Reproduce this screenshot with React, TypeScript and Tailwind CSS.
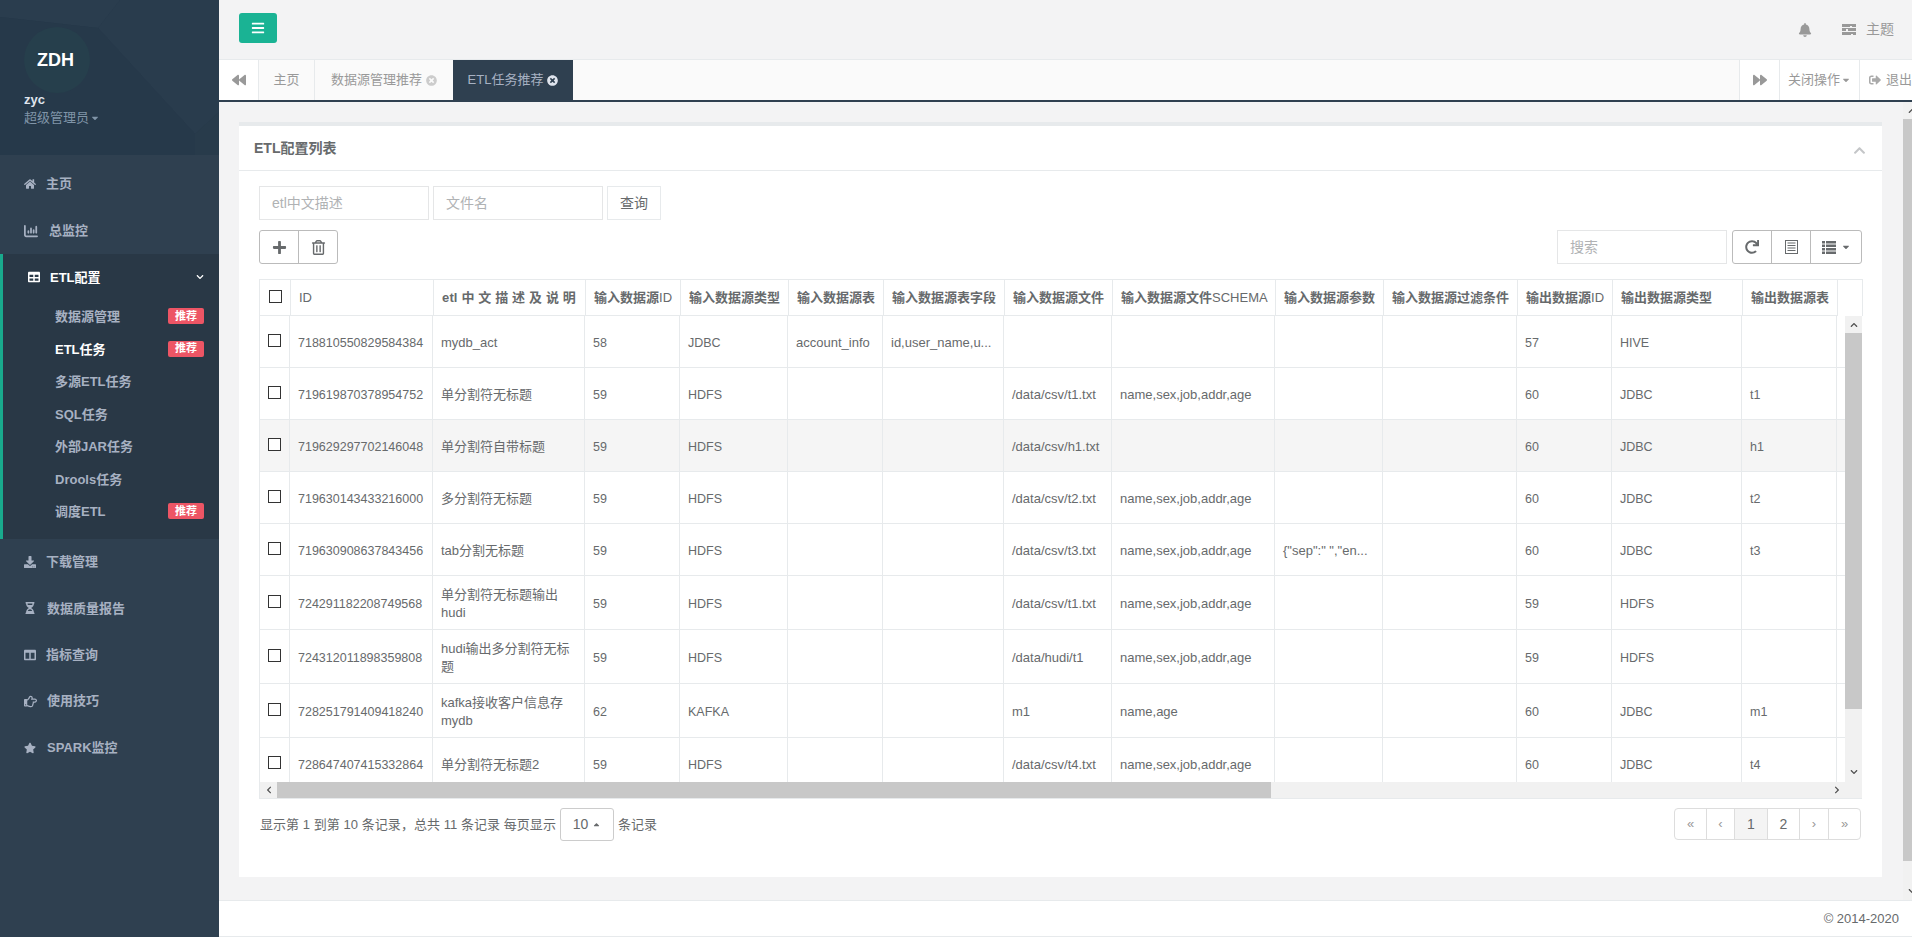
import React from "react";
import {
  FaHome, FaTable, FaDownload, FaHourglassHalf, FaColumns, FaRegHandPointRight, FaStar, FaBell, FaBars,
  FaBackward, FaForward, FaTimesCircle, FaSignOutAlt, FaPlus, FaRegTrashAlt, FaRedo,
  FaChevronUp, FaChevronDown, FaChevronLeft, FaChevronRight, FaCaretDown, FaCaretUp,
} from "react-icons/fa";
import { FaChartColumn } from "react-icons/fa6";

const headW = ["w-[32px]", "w-[143px]", "w-[152px]", "w-[95px]", "w-[108px]", "w-[95px]", "w-[121px]", "w-[108px]", "w-[163px]", "w-[108px]", "w-[134px]", "w-[95px]", "w-[130px]", "w-[95px]", "w-[25px]"];
const bodyW = ["w-[31px]", "w-[143px]", "w-[152px]", "w-[95px]", "w-[108px]", "w-[95px]", "w-[121px]", "w-[108px]", "w-[163px]", "w-[108px]", "w-[134px]", "w-[95px]", "w-[130px]", "w-[95px]", "w-[40px]"];
const N = ({ children }: { children: React.ReactNode }) => <span className="font-normal">{children}</span>;
const heads: React.ReactNode[] = [
  <N>ID</N>,
  <span className="tracking-[0.15px]">etl 中 文 描 述 及 说 明</span>,
  <>输入数据源<N>ID</N></>,
  "输入数据源类型", "输入数据源表", "输入数据源表字段", "输入数据源文件",
  <>输入数据源文件<N>SCHEMA</N></>,
  "输入数据源参数", "输入数据源过滤条件",
  <>输出数据源<N>ID</N></>,
  "输出数据源类型", "输出数据源表", "",
];
const S = "name,sex,job,addr,age";
const rows: { h: string; hover?: boolean; c: string[] }[] = [
  { h: "h-[52px]", c: ["718810550829584384", "mydb_act", "58", "JDBC", "account_info", "id,user_name,u...", "", "", "", "", "57", "HIVE", "", ""] },
  { h: "h-[52px]", c: ["719619870378954752", "单分割符无标题", "59", "HDFS", "", "", "/data/csv/t1.txt", S, "", "", "60", "JDBC", "t1", ""] },
  { h: "h-[52px]", hover: true, c: ["719629297702146048", "单分割符自带标题", "59", "HDFS", "", "", "/data/csv/h1.txt", "", "", "", "60", "JDBC", "h1", ""] },
  { h: "h-[52px]", c: ["719630143433216000", "多分割符无标题", "59", "HDFS", "", "", "/data/csv/t2.txt", S, "", "", "60", "JDBC", "t2", ""] },
  { h: "h-[52px]", c: ["719630908637843456", "tab分割无标题", "59", "HDFS", "", "", "/data/csv/t3.txt", S, "{\"sep\":\" \",\"en...", "", "60", "JDBC", "t3", ""] },
  { h: "h-[54px]", c: ["724291182208749568", "单分割符无标题输出hudi", "59", "HDFS", "", "", "/data/csv/t1.txt", S, "", "", "59", "HDFS", "", ""] },
  { h: "h-[54px]", c: ["724312011898359808", "hudi输出多分割符无标题", "59", "HDFS", "", "", "/data/hudi/t1", S, "", "", "59", "HDFS", "", ""] },
  { h: "h-[54px]", c: ["728251791409418240", "kafka接收客户信息存mydb", "62", "KAFKA", "", "", "m1", "name,age", "", "", "60", "JDBC", "m1", ""] },
  { h: "h-[52px]", c: ["728647407415332864", "单分割符无标题2", "59", "HDFS", "", "", "/data/csv/t4.txt", S, "", "", "60", "JDBC", "t4", ""] },
];

function Box() {
  return <div className="w-[13px] h-[13px] border border-[#333] bg-white mb-[3px]" />;
}

function NavItem({ icon, text, gap }: { icon: React.ReactNode; text: string; gap: string }) {
  return (
    <div className={`h-[46.4px] pl-[24px] flex items-center font-semibold text-[13px] text-[#a7b1c2] ${gap}`}>
      {icon}
      <span>{text}</span>
    </div>
  );
}

function SubItem({ text, active, badge }: { text: string; active?: boolean; badge?: boolean }) {
  return (
    <div className={`h-[32.5px] pl-[52px] pr-[15px] flex items-center justify-between text-[13px] font-semibold ${active ? "text-white" : "text-[#a7b1c2]"}`}>
      <span>{text}</span>
      {badge && <span className="w-[36px] h-[16px] mb-[2px] rounded-[2px] bg-[#ed5565] text-white text-[11px] font-bold flex items-center justify-center">推荐</span>}
    </div>
  );
}

function Sidebar() {
  return (
    <aside className="w-[219px] shrink-0 h-full bg-[#2f4050] flex flex-col">
      <div className="relative h-[155px] bg-[#26384a] overflow-hidden shrink-0">
        <svg className="absolute inset-0" width="219" height="155" viewBox="0 0 219 155">
          <polygon points="0,0 120,0 98,28 0,17" fill="#2a3d4e" />
          <polygon points="120,0 219,0 219,112 195,134 98,28" fill="#293c4d" />
          <polygon points="195,134 219,112 219,155 195,155" fill="#283b4b" />
          <polygon points="0,17 98,28 195,134 195,155 0,155" fill="#26394a" />
          <circle cx="57" cy="60" r="33" fill="#263f4c" />
        </svg>
        <div className="relative pl-[24px]">
          <div className="h-[44px] mt-[38px] pl-[13px] flex items-center text-white font-bold text-[18px]">ZDH</div>
          <div className="mt-[9px] text-[13px] leading-[18px] font-bold text-[#dfe4ed]">zyc</div>
          <div className="flex items-center text-[13px] leading-[18px] text-[#8095a8]">超级管理员<FaCaretDown className="ml-[1px] text-[10px]" /></div>
        </div>
      </div>
      <div className="pt-[6px]">
        <NavItem icon={<FaHome className="text-[12px]" />} text="主页" gap="gap-[10px]" />
        <NavItem icon={<FaChartColumn className="text-[14px]" />} text="总监控" gap="gap-[11px]" />
      </div>
      <div className="bg-[#293846] border-l-[3px] border-[#19aa8d] h-[285px]">
        <div className="h-[47px] pl-[25px] pr-[15px] flex items-center text-[13px] font-semibold text-white">
          <FaTable className="text-[12px] mr-[10px]" />
          <span className="flex-1">ETL配置</span>
          <FaChevronDown className="text-[8px]" />
        </div>
        <SubItem text="数据源管理" badge />
        <SubItem text="ETL任务" active badge />
        <SubItem text="多源ETL任务" />
        <SubItem text="SQL任务" />
        <SubItem text="外部JAR任务" />
        <SubItem text="Drools任务" />
        <SubItem text="调度ETL" badge />
      </div>
      <NavItem icon={<FaDownload className="text-[12px]" />} text="下载管理" gap="gap-[10px]" />
      <NavItem icon={<FaHourglassHalf className="text-[12px]" />} text="数据质量报告" gap="gap-[11px]" />
      <NavItem icon={<FaColumns className="text-[12px]" />} text="指标查询" gap="gap-[10px]" />
      <NavItem icon={<FaRegHandPointRight className="text-[13px]" />} text="使用技巧" gap="gap-[10px]" />
      <NavItem icon={<FaStar className="text-[12px]" />} text="SPARK监控" gap="gap-[11px]" />
    </aside>
  );
}

function TopBar() {
  return (
    <div className="h-[59px] shrink-0 bg-[#f3f3f4] flex items-start pl-[20px] pr-[18px]">
      <button className="mt-[13px] w-[38px] h-[30px] rounded-[3px] bg-[#1ab394] text-white flex items-center justify-center">
        <FaBars className="text-[14px]" />
      </button>
      <div className="ml-auto h-full flex items-center text-[#999] text-[14px]">
        <FaBell className="text-[14px]" />
        <svg className="ml-[30px] mr-[10px]" width="14" height="11" viewBox="0 0 14 11" fill="#999">
          <path d="M0 0h14v3H10V2H8v1H0z" />
          <path d="M0 4h14v3H6V5H4v2H0z" />
          <path d="M0 8h14v3H11v-1H9v1H0z" />
        </svg>
        <span>主题</span>
      </div>
    </div>
  );
}

function TabRow() {
  return (
    <div className="h-[43px] shrink-0 border-t border-t-[#e7eaec] border-b-2 border-b-[#2f4050] bg-[#fafafa] flex text-[13px] text-[#999]">
      <div className="w-[40px] bg-white border-r border-[#e7eaec] flex items-center justify-center"><FaBackward className="text-[14px]" /></div>
      <div className="w-[56px] border-r border-[#e7eaec] flex items-center justify-center">主页</div>
      <div className="w-[138px] flex items-center justify-center gap-[4px]">数据源管理推荐<FaTimesCircle className="text-[11px] text-[#ccc]" /></div>
      <div className="w-[120px] bg-[#2f4050] text-[#a7b1c2] flex items-center justify-center gap-[4px]">ETL任务推荐<FaTimesCircle className="text-[11px] text-[#dfe4ed]" /></div>
      <div className="flex-1" />
      <div className="w-[40px] bg-white border-l border-[#e7eaec] flex items-center justify-center"><FaForward className="text-[14px]" /></div>
      <div className="w-[80px] bg-white border-l border-[#e7eaec] flex items-center justify-center">关闭操作<FaCaretDown className="ml-[1px] text-[10px]" /></div>
      <div className="w-[53px] bg-white border-l border-[#e7eaec] flex items-center pl-[9px] whitespace-nowrap overflow-hidden"><FaSignOutAlt className="text-[12px] text-[#aaa] mr-[5px] shrink-0" />退出</div>
    </div>
  );
}

function HeadTable() {
  return (
    <table className="table-fixed border-separate border-spacing-0 w-[1603px]">
      <colgroup>{headW.map((w, i) => <col key={i} className={w} />)}</colgroup>
      <thead>
        <tr className="h-[37px]">
          <th className="border-t border-l border-b border-r border-[#e7eaec] p-0">
            <div className="flex justify-center pl-[1px]"><Box /></div>
          </th>
          {heads.map((h, i) => (
            <th key={i} className={`border-t border-b border-r border-[#e7eaec] pl-[8px] pr-[4px] text-left text-[13px] font-bold whitespace-nowrap overflow-hidden ${i === 13 ? "border-b-0" : ""}`}>{h}</th>
          ))}
        </tr>
      </thead>
    </table>
  );
}

function BodyTable() {
  return (
    <table className="table-fixed border-separate border-spacing-0 w-[1618px]">
      <colgroup>{bodyW.map((w, i) => <col key={i} className={w} />)}</colgroup>
      <tbody>
        {rows.map((r, ri) => (
          <tr key={ri} className={`${r.h} ${r.hover ? "bg-[#f5f5f5]" : "bg-white"}`}>
            <td className="border-l border-b border-r border-[#e7eaec] p-0">
              <div className="flex justify-center"><Box /></div>
            </td>
            {r.c.map((t, i) => (
              <td key={i} className={`border-b border-r border-[#e7eaec] pl-[8px] pr-[6px] pt-[2px] leading-[18px] overflow-hidden ${i === 1 ? "text-[13px]" : i >= 4 && i <= 8 ? "text-[13px] whitespace-nowrap" : "text-[12.5px] whitespace-nowrap"}`}>{t}</td>
            ))}
          </tr>
        ))}
      </tbody>
    </table>
  );
}

function DataGrid() {
  return (
    <div className="w-[1603px] border-b border-[#e7eaec]">
      <HeadTable />
      <div className="flex h-[482px]">
        <div className="w-[1586px] flex flex-col">
          <div className="h-[466px] overflow-hidden"><BodyTable /></div>
          <div className="h-[16px] bg-[#f1f1f1] border-l border-[#e7eaec] flex items-stretch">
            <div className="w-[17px] flex items-center justify-center"><FaChevronLeft className="text-[8px] text-[#505050]" /></div>
            <div className="w-[994px] bg-[#c8c8c8]" />
            <div className="ml-auto w-[17px] flex items-center justify-center"><FaChevronRight className="text-[8px] text-[#505050]" /></div>
          </div>
        </div>
        <div className="w-[17px] bg-[#f1f1f1] flex flex-col">
          <div className="h-[17px] flex items-center justify-center"><FaChevronUp className="text-[8px] text-[#505050]" /></div>
          <div className="h-[376px] bg-[#c8c8c8]" />
          <div className="h-[73px] pb-[1px] flex items-end justify-center"><FaChevronDown className="text-[8px] mb-[5px] text-[#505050]" /></div>
        </div>
      </div>
    </div>
  );
}

function Pager() {
  const items: [string, string, string][] = [
    ["«", "w-[32px] text-[13px]", "text-[#999]"], ["‹", "w-[28px] text-[13px]", "text-[#999]"], ["1", "w-[33px] text-[14px]", "bg-[#f4f4f4]"],
    ["2", "w-[32px] text-[14px]", ""], ["›", "w-[29px] text-[13px]", "text-[#999]"], ["»", "w-[31px] text-[13px]", "text-[#999]"],
  ];
  return (
    <div className="ml-auto mr-[1px] h-[32px] flex border border-[#ddd] rounded-[4px] overflow-hidden">
      {items.map(([t, w, c], i) => (
        <div key={i} className={`${w} ${c} flex items-center justify-center ${i < 5 ? "border-r border-[#ddd]" : ""}`}>{t}</div>
      ))}
    </div>
  );
}

function Panel() {
  return (
    <div className="w-[1643px] h-[755px] bg-white border-t-4 border-[#e7eaec] flex flex-col">
      <div className="h-[45px] shrink-0 border-b border-[#e7eaec] pl-[15px] pr-[16px] flex items-center">
        <span className="font-bold text-[14px]">ETL配置列表</span>
        <FaChevronUp className="ml-auto text-[13px] mt-[4px] text-[#c4c6c8]" />
      </div>
      <div className="px-[20px] pt-[15px]">
        <div className="flex gap-[4px] h-[34px]">
          <input placeholder="etl中文描述" className="w-[170px] border border-[#e5e6e7] px-[12px] text-[14px] placeholder:text-[#b0b2b4] outline-none" />
          <input placeholder="文件名" className="w-[170px] border border-[#e5e6e7] px-[12px] text-[14px] placeholder:text-[#b0b2b4] outline-none" />
          <button className="w-[54px] border border-[#e7eaec] text-[14px]">查询</button>
        </div>
        <div className="mt-[10px] h-[34px] flex">
          <div className="flex w-[79px] border border-[#bbb] rounded-[3px]">
            <div className="flex-1 border-r border-[#bbb] flex items-center justify-center"><FaPlus className="text-[15px]" /></div>
            <div className="flex-1 flex items-center justify-center"><FaRegTrashAlt className="text-[15px]" /></div>
          </div>
          <input placeholder="搜索" className="ml-auto w-[170px] border border-[#e5e6e7] px-[12px] text-[14px] placeholder:text-[#b0b2b4] outline-none" />
          <div className="ml-[5px] flex w-[130px] border border-[#bbb] rounded-[3px]">
            <div className="w-[39px] border-r border-[#bbb] flex items-center justify-center"><FaRedo className="text-[14px]" /></div>
            <div className="w-[39px] border-r border-[#bbb] flex items-center justify-center">
              <svg width="13" height="14" viewBox="0 0 13 14" fill="#676a6c">
                <path d="M0 0h13v14H0zM1 1v12h11V1z" fillRule="evenodd" />
                <path d="M2.5 2.5h8v1h-8zM2.5 5h8v1h-8zM2.5 7.5h8v1h-8zM2.5 10h8v1h-8z" />
              </svg>
            </div>
            <div className="flex-1 flex items-center justify-center gap-[5px]">
              <svg width="14" height="14" viewBox="0 0 14 14" fill="#676a6c">
                <path d="M0 1h3v2.5H0zM4 1h10v2.5H4zM0 4.5h3V7H0zM4 4.5h10V7H4zM0 8h3v2.5H0zM4 8h10v2.5H4zM0 11.500h3V14H0zM4 11.500h10V14H4z" />
              </svg>
              <FaCaretDown className="text-[10px]" />
            </div>
          </div>
        </div>
        <div className="mt-[15px]"><DataGrid /></div>
        <div className="mt-[9px] flex items-start">
          <div className="h-[33px] flex items-center text-[13px] whitespace-nowrap pl-[1px]">
            <span className="tracking-[0.05px]">显示第 1 到第 10 条记录，总共 11 条记录 每页显示</span>
            <span className="w-[54px] h-[33px] ml-[4px] mr-[4px] border border-[#ccc] rounded-[3px] flex items-center justify-center gap-[4px] text-[14px]">10<FaCaretUp className="text-[9px]" /></span>
            <span>条记录</span>
          </div>
          <Pager />
        </div>
      </div>
    </div>
  );
}

function MainScroll() {
  return (
    <div className="w-[9px] shrink-0 overflow-hidden bg-[#f1f1f1]">
      <div className="w-[17px] h-full flex flex-col">
        <div className="h-[17px] flex items-center justify-center"><FaChevronUp className="text-[8px] text-[#505050]" /></div>
        <div className="h-[742px] bg-[#c8c8c8]" />
        <div className="flex-1 flex items-end justify-center pb-[5px]"><FaChevronDown className="text-[8px] text-[#505050]" /></div>
      </div>
    </div>
  );
}

export default function App() {
  return (
    <div className="w-[1912px] h-[937px] overflow-hidden flex bg-[#f3f3f4] text-[#676a6c] [font-family:'Liberation_Sans','Noto_Sans_CJK_SC',sans-serif]">
      <Sidebar />
      <div className="flex-1 min-w-0 flex flex-col">
        <TopBar />
        <TabRow />
        <div className="flex h-[798px]">
          <div className="flex-1 pl-[20px] pt-[20px]"><Panel /></div>
          <MainScroll />
        </div>
        <div className="flex-1 bg-white border-t border-b border-[#e7eaec] flex items-center justify-end pr-[13px] text-[13px]">© 2014-2020</div>
      </div>
    </div>
  );
}
